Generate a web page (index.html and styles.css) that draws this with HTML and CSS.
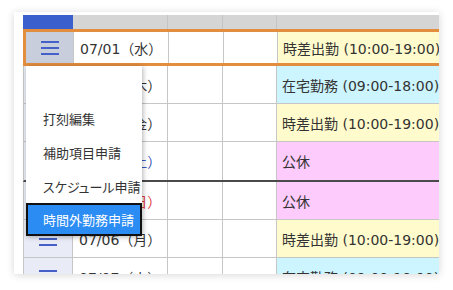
FILE: index.html
```html
<!DOCTYPE html>
<html lang="ja">
<head>
<meta charset="utf-8">
<link rel="stylesheet" href="styles.css">
</head>
<body>
<div class="card">
  <div class="grid">
    <div class="row head">
      <div class="c c1 blue"></div>
      <div class="c c2"></div>
      <div class="c c3"></div>
      <div class="c c4"></div>
      <div class="c c5"></div>
    </div>
    <div class="row sel">
      <div class="c c1"><span class="burger"><i></i><i></i><i></i></span></div>
      <div class="c c2">07/01（水）</div>
      <div class="c c3"></div>
      <div class="c c4"></div>
      <div class="c c5 yellow">時差出勤 (10:00-19:00)</div>
    </div>
    <div class="row">
      <div class="c c1"><span class="burger"><i></i><i></i><i></i></span></div>
      <div class="c c2">07/02（木）</div>
      <div class="c c3"></div>
      <div class="c c4"></div>
      <div class="c c5 cyan">在宅勤務 (09:00-18:00)</div>
    </div>
    <div class="row">
      <div class="c c1"><span class="burger"><i></i><i></i><i></i></span></div>
      <div class="c c2">07/03（金）</div>
      <div class="c c3"></div>
      <div class="c c4"></div>
      <div class="c c5 yellow">時差出勤 (10:00-19:00)</div>
    </div>
    <div class="row week">
      <div class="c c1"><span class="burger"><i></i><i></i><i></i></span></div>
      <div class="c c2 sat">07/04（土）</div>
      <div class="c c3"></div>
      <div class="c c4"></div>
      <div class="c c5 pink">公休</div>
    </div>
    <div class="row">
      <div class="c c1"><span class="burger"><i></i><i></i><i></i></span></div>
      <div class="c c2 sun">07/05（日）</div>
      <div class="c c3"></div>
      <div class="c c4"></div>
      <div class="c c5 pink">公休</div>
    </div>
    <div class="row">
      <div class="c c1"><span class="burger"><i></i><i></i><i></i></span></div>
      <div class="c c2">07/06（月）</div>
      <div class="c c3"></div>
      <div class="c c4"></div>
      <div class="c c5 yellow">時差出勤 (10:00-19:00)</div>
    </div>
    <div class="row">
      <div class="c c1"><span class="burger"><i></i><i></i><i></i></span></div>
      <div class="c c2">07/07（火）</div>
      <div class="c c3"></div>
      <div class="c c4"></div>
      <div class="c c5 cyan">在宅勤務 (09:00-18:00)</div>
    </div>
  </div>
</div>
<ul class="menu">
  <li class="blank"></li>
  <li>打刻編集</li>
  <li>補助項目申請</li>
  <li>スケジュール申請</li>
  <li class="active">時間外勤務申請</li>
</ul>
</body>
</html>
```
FILE: styles.css
```css
html, body {
  margin: 0;
  padding: 0;
  background: #ffffff;
}
body {
  width: 453px;
  height: 290px;
  overflow: hidden;
  position: relative;
  font-family: "DejaVu Sans", "Noto Sans CJK JP", sans-serif;
  font-size: 14px;
  color: #333333;
}
.card {
  margin: 12px 0 0 14px;
  width: 425px;
  height: 262px;
  background: #ffffff;
  box-shadow: 0 1px 8px rgba(0, 0, 0, 0.16);
  padding: 3px 0 0 9px;
  box-sizing: border-box;
  overflow: hidden;
}
.grid {
  display: flex;
  flex-direction: column;
  width: 480px;
}
.row {
  display: flex;
  height: 38px;
  box-sizing: border-box;
  border-bottom: 1px solid #c6c6c6;
  border-left: 1px solid #c6c6c6;
}
.row.head {
  height: 14px;
  border: none;
}
.c {
  box-sizing: border-box;
  border-right: 1px solid #c6c6c6;
  display: flex;
  align-items: center;
  white-space: nowrap;
  overflow: hidden;
}
.c1 { width: 49px; justify-content: center; background: #e9ecf6; }
.c2 { width: 95px; padding-left: 6px; background: #ffffff; }
.c3 { width: 55px; background: #ffffff; }
.c4 { width: 54px; background: #ffffff; }
.c5 { flex: 1; padding-left: 5px; }
.head .c { background: #d5d5d5; border-right: 1px solid #c4c4c4; }
.head .c1 { width: 50px; }
.head .c1.blue { background: #3b5fcc; border-right: none; }
.row.sel {
  height: 37px;
  border: 3px solid #e38d3e;
}
.row.sel .c1 { width: 48px; background: #c9cedc; }
.row.week { height: 40px; border-bottom: 2px solid #4a4a4a; }
.yellow { background: #fffbcc; }
.cyan { background: #ccf5ff; }
.pink { background: #fdccfd; }
.sat { color: #3b55c0; }
.sun { color: #e04040; }
.burger {
  display: flex;
  flex-direction: column;
  gap: 4px;
  width: 18px;
}
.burger i {
  display: block;
  height: 2px;
  background: #4560c6;
}
.menu {
  position: absolute;
  z-index: 2;
  left: 26px;
  top: 66px;
  width: 116px;
  margin: 0;
  padding: 0;
  list-style: none;
  background: #ffffff;
  box-shadow: 1px 1px 5px rgba(0, 0, 0, 0.3);
  font-family: "Noto Sans CJK JP", sans-serif;
  font-size: 13px;
  font-feature-settings: "palt";
}
.menu li {
  height: 34px;
  display: flex;
  align-items: center;
  padding-left: 17px;
  box-sizing: border-box;
  white-space: nowrap;
  color: #333333;
}
.menu li.blank { height: 35px; }
.menu li.active {
  background: #2b8cf3;
  color: #ffffff;
  border: 2px solid #111111;
  padding-left: 15px;
  height: 33px;
}
```
